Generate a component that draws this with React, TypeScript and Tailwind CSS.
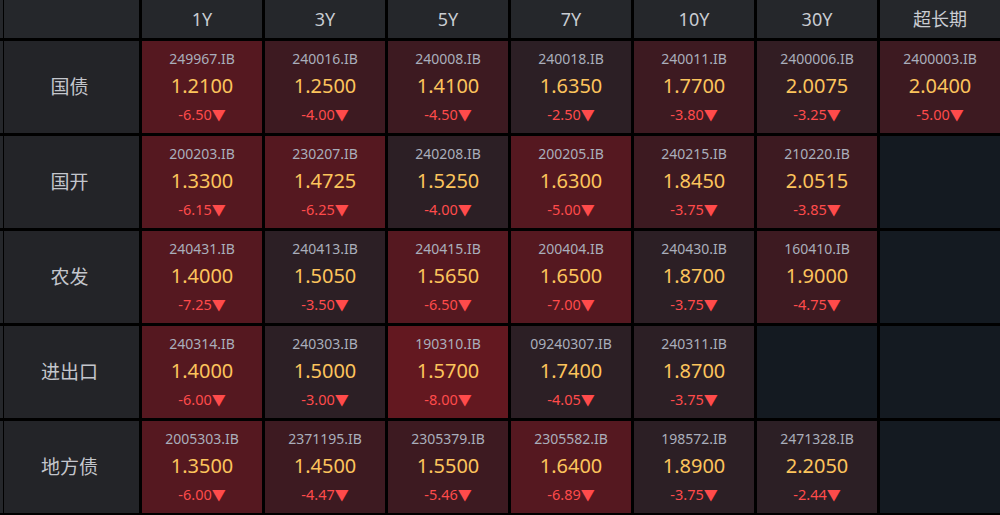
import React from 'react';

// background shades for each quote cell
const S = 'bg-[#551820]';
const X = 'bg-[#631820]';
const M = 'bg-[#3d1a21]';
const W = 'bg-[#2c1f25]';
const W2 = 'bg-[#321d23]';

const terms = ['1Y', '3Y', '5Y', '7Y', '10Y', '30Y', '超长期'];

type Quote = { code: string; rate: string; chg: string; bg: string } | null;

const rows: { name: string; quotes: Quote[] }[] = [
    {
        name: '国债',
        quotes: [
            { code: '249967.IB', rate: '1.2100', chg: '-6.50', bg: S },
            { code: '240016.IB', rate: '1.2500', chg: '-4.00', bg: M },
            { code: '240008.IB', rate: '1.4100', chg: '-4.50', bg: M },
            { code: '240018.IB', rate: '1.6350', chg: '-2.50', bg: W },
            { code: '240011.IB', rate: '1.7700', chg: '-3.80', bg: M },
            { code: '2400006.IB', rate: '2.0075', chg: '-3.25', bg: W2 },
            { code: '2400003.IB', rate: '2.0400', chg: '-5.00', bg: M },
        ],
    },
    {
        name: '国开',
        quotes: [
            { code: '200203.IB', rate: '1.3300', chg: '-6.15', bg: S },
            { code: '230207.IB', rate: '1.4725', chg: '-6.25', bg: S },
            { code: '240208.IB', rate: '1.5250', chg: '-4.00', bg: W },
            { code: '200205.IB', rate: '1.6300', chg: '-5.00', bg: S },
            { code: '240215.IB', rate: '1.8450', chg: '-3.75', bg: M },
            { code: '210220.IB', rate: '2.0515', chg: '-3.85', bg: M },
            null,
        ],
    },
    {
        name: '农发',
        quotes: [
            { code: '240431.IB', rate: '1.4000', chg: '-7.25', bg: S },
            { code: '240413.IB', rate: '1.5050', chg: '-3.50', bg: W },
            { code: '240415.IB', rate: '1.5650', chg: '-6.50', bg: S },
            { code: '200404.IB', rate: '1.6500', chg: '-7.00', bg: S },
            { code: '240430.IB', rate: '1.8700', chg: '-3.75', bg: W },
            { code: '160410.IB', rate: '1.9000', chg: '-4.75', bg: M },
            null,
        ],
    },
    {
        name: '进出口',
        quotes: [
            { code: '240314.IB', rate: '1.4000', chg: '-6.00', bg: S },
            { code: '240303.IB', rate: '1.5000', chg: '-3.00', bg: W },
            { code: '190310.IB', rate: '1.5700', chg: '-8.00', bg: X },
            { code: '09240307.IB', rate: '1.7400', chg: '-4.05', bg: W },
            { code: '240311.IB', rate: '1.8700', chg: '-3.75', bg: W },
            null,
            null,
        ],
    },
    {
        name: '地方债',
        quotes: [
            { code: '2005303.IB', rate: '1.3500', chg: '-6.00', bg: S },
            { code: '2371195.IB', rate: '1.4500', chg: '-4.47', bg: M },
            { code: '2305379.IB', rate: '1.5500', chg: '-5.46', bg: M },
            { code: '2305582.IB', rate: '1.6400', chg: '-6.89', bg: S },
            { code: '198572.IB', rate: '1.8900', chg: '-3.75', bg: W },
            { code: '2471328.IB', rate: '2.2050', chg: '-2.44', bg: W },
            null,
        ],
    },
];

function QuoteCell({ q }: { q: Quote }) {
    if (!q) {
        return <div className="bg-[#141a21]" />;
    }
    return (
        <div className={`${q.bg} flex flex-col items-center justify-center`}>
            <div className="text-[14px] leading-[24px] text-[#a9aebb]">{q.code}</div>
            <div className="text-[20px] leading-[30px] text-[#fcc45c]">{q.rate}</div>
            <div className="text-[14.5px] leading-[24px] text-[#ff4b4b] mt-[1px]">
                {q.chg}
                <span className="text-[14px]">▼</span>
            </div>
        </div>
    );
}

export default function App() {
    return (
        <div
            className="w-[1000px] h-[515px] bg-black overflow-hidden"
            style={{ fontFamily: '"Noto Sans", "Noto Sans CJK SC", sans-serif' }}
        >
            <div className="grid grid-cols-[139px_repeat(7,1fr)] grid-rows-[38px_repeat(5,92px)] gap-[3px]">
                {/* Header row */}
                <div className="bg-[#25272b] shadow-[inset_3px_0_0_#25272b,inset_4px_0_0_#000]" />
                {terms.map((t) => (
                    <div
                        key={t}
                        className="bg-[#25272b] flex items-center justify-center text-[18px] text-[#c9ccd2]"
                    >
                        {t}
                    </div>
                ))}

                {/* Body rows */}
                {rows.map((r) => (
                    <React.Fragment key={r.name}>
                        <div className="bg-[#232428] shadow-[inset_3px_0_0_#25272b,inset_4px_0_0_#000] flex items-center justify-center text-[19px] text-[#c3c6cc]">
                            {r.name}
                        </div>
                        {r.quotes.map((q, i) => (
                            <QuoteCell key={i} q={q} />
                        ))}
                    </React.Fragment>
                ))}
            </div>
        </div>
    );
}
